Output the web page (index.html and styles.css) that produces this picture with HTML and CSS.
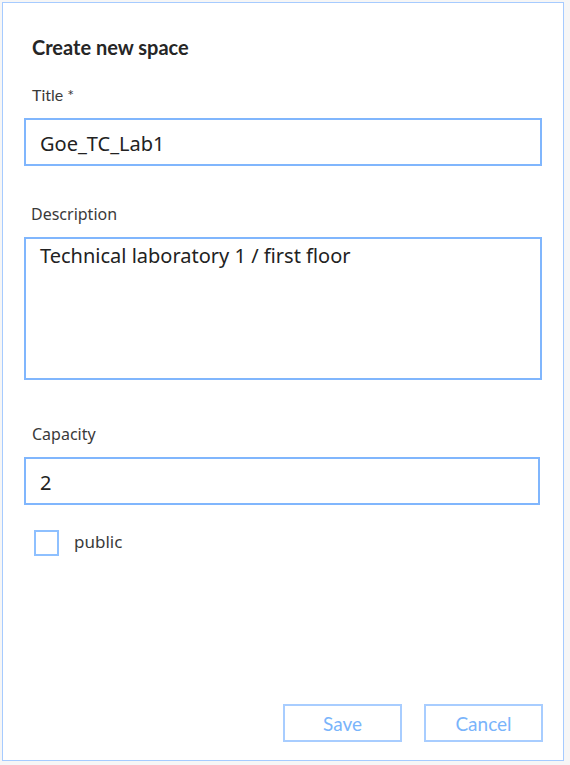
FILE: index.html
```html
<!DOCTYPE html>
<html lang="en">
<head>
<meta charset="utf-8">
<title>Create new space</title>
<link rel="stylesheet" href="styles.css">
</head>
<body>
<div class="dialog">
  <h1 class="heading">Create new space</h1>
  <label class="label label-title">Title *</label>
  <input class="field" type="text" value="Goe_TC_Lab1">
  <label class="label label-alt label-desc">Description</label>
  <textarea class="field area">Technical laboratory 1 / first floor</textarea>
  <label class="label label-alt label-cap">Capacity</label>
  <input class="field field-cap" type="text" value="2">
  <div class="check-row">
    <span class="checkbox"></span>
    <span class="check-text">public</span>
  </div>
  <div class="actions">
    <button class="btn" type="button">Save</button>
    <button class="btn" type="button">Cancel</button>
  </div>
</div>
</body>
</html>
```

FILE: styles.css
```css
* { box-sizing: border-box; }
html, body { margin: 0; padding: 0; }
body {
  background: #f6f6f6;
  font-family: Lato, sans-serif;
  width: 570px;
  height: 765px;
  overflow: hidden;
}
.dialog {
  margin: 2px 0 0 2px;
  width: 562px;
  height: 759px;
  background: #ffffff;
  border: 1px solid #a6cbff;
  padding: 33px 21px 18px 21px;
  display: flex;
  flex-direction: column;
}
.heading {
  margin: 0 0 0 8px;
  font-size: 20px;
  line-height: 22px;
  font-weight: 700;
  color: #262626;
}
.label {
  display: block;
  margin-left: 8px;
  font-size: 16px;
  line-height: 20px;
  color: #3a3a3a;
}
.label-alt {
  font-family: "Noto Sans", "DejaVu Sans", sans-serif;
  font-size: 16px;
}
.label-title { margin-top: 27px; }
.label-desc { margin-top: 38px; margin-left: 7px; }
.label-cap { margin-top: 44px; }
.field {
  display: block;
  margin-top: 13px;
  width: 100%;
  height: 48px;
  border: 2px solid #80b6fd;
  padding: 2px 14px 0 14px;
  font-family: "Noto Sans", "DejaVu Sans", sans-serif;
  font-size: 20px;
  color: #222;
  background: #fff;
  outline: none;
  border-radius: 0;
}
.area {
  height: 143px;
  padding: 3px 14px;
  resize: none;
  line-height: normal;
  overflow: hidden;
}
.field-cap { width: calc(100% - 2px); }
.check-row {
  display: flex;
  align-items: center;
  margin-top: 25px;
  margin-left: 10px;
}
.checkbox {
  width: 25px;
  height: 26px;
  border: 2px solid #8ec0ff;
  background: #fff;
}
.check-text {
  margin-left: 15px;
  font-family: "Noto Sans", "DejaVu Sans", sans-serif;
  font-size: 17px;
  color: #3a3a3a;
  position: relative;
  top: -2px;
}
.actions {
  margin-top: auto;
  margin-right: -1px;
  display: flex;
  justify-content: flex-end;
  gap: 22px;
}
.btn {
  width: 119px;
  height: 38px;
  border: 2px solid #a8cdff;
  background: #fff;
  color: #79b4fb;
  font-family: Lato, sans-serif;
  font-size: 19px;
  padding: 0;
  border-radius: 0;
}
```
